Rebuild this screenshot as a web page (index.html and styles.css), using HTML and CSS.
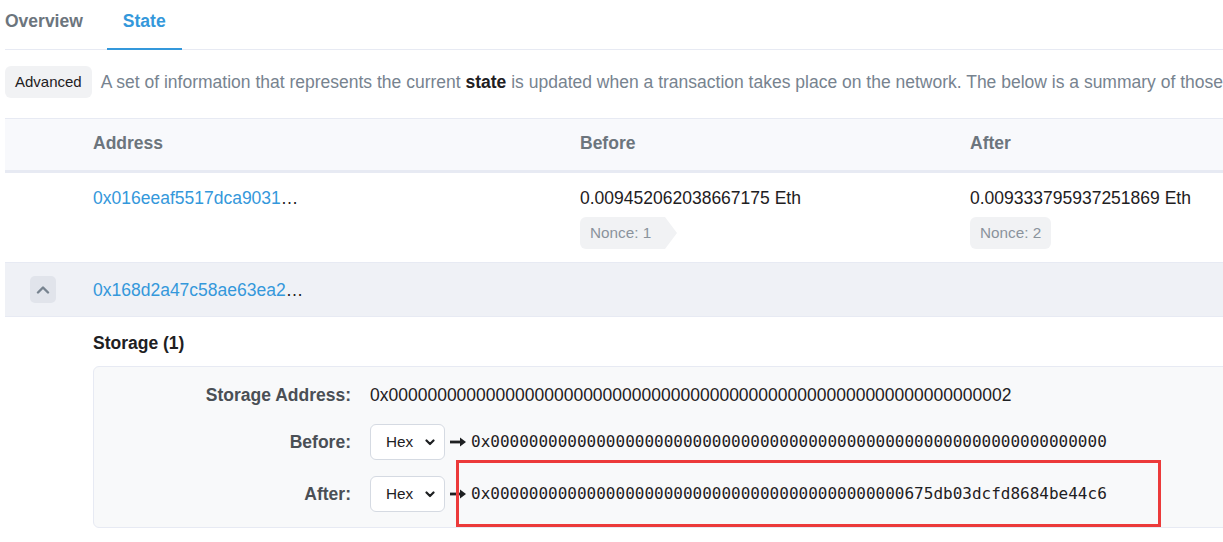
FILE: index.html
```html
<!DOCTYPE html>
<html lang="en">
<head>
<meta charset="utf-8">
<title>State</title>
<link rel="stylesheet" href="styles.css">
</head>
<body>
<div class="page">
  <nav class="tabs">
    <a class="tab first">Overview</a>
    <a class="tab active">State</a>
  </nav>

  <div class="intro">
    <span class="adv">Advanced</span>
    <p class="desc">A set of information that represents the current <b>state</b> is updated when a transaction takes place on the network. The below is a summary of those</p>
  </div>

  <div class="table">
    <div class="grid thead">
      <div></div>
      <div>Address</div>
      <div>Before</div>
      <div>After</div>
    </div>

    <div class="grid trow">
      <div></div>
      <div class="addr"><a class="link">0x016eeaf5517dca9031</a>…</div>
      <div class="cell">
        <div class="val">0.009452062038667175 Eth</div>
        <span class="nonce tip">Nonce: 1</span>
      </div>
      <div class="cell">
        <div class="val">0.009333795937251869 Eth</div>
        <span class="nonce">Nonce: 2</span>
      </div>
    </div>

    <div class="grid trow open">
      <div class="tog-cell">
        <button class="toggle" aria-label="collapse">
          <svg width="14" height="9" viewBox="0 0 14 9"><path d="M2 7.5 L7 2.5 L12 7.5" fill="none" stroke="#77838f" stroke-width="2.4" stroke-linecap="round" stroke-linejoin="round"/></svg>
        </button>
      </div>
      <div class="addr"><a class="link">0x168d2a47c58ae63ea2</a>…</div>
      <div></div>
      <div></div>
    </div>

    <div class="detail">
      <h4 class="st-title">Storage (1)</h4>
      <div class="st-box">
        <div class="st-row first-row">
          <div class="st-label">Storage Address:</div>
          <div class="st-val">0x0000000000000000000000000000000000000000000000000000000000000002</div>
        </div>
        <div class="st-row mid-row">
          <div class="st-label">Before:</div>
          <div class="st-val flex">
            <span class="sel">Hex
              <svg width="10" height="7" viewBox="0 0 10 7"><path d="M1.5 1.5 L5 5 L8.5 1.5" fill="none" stroke="#1e2022" stroke-width="2.2" stroke-linecap="round" stroke-linejoin="round"/></svg>
            </span>
            <svg class="arrow" width="16" height="10" viewBox="0 0 16 10"><rect x="0" y="3.6" width="11" height="2.8" fill="#1e2022"/><polygon points="10,0.5 16,5 10,9.5" fill="#1e2022"/></svg>
            <span class="mono">0x0000000000000000000000000000000000000000000000000000000000000000</span>
          </div>
        </div>
        <div class="st-row">
          <div class="st-label">After:</div>
          <div class="st-val flex">
            <span class="sel">Hex
              <svg width="10" height="7" viewBox="0 0 10 7"><path d="M1.5 1.5 L5 5 L8.5 1.5" fill="none" stroke="#1e2022" stroke-width="2.2" stroke-linecap="round" stroke-linejoin="round"/></svg>
            </span>
            <svg class="arrow" width="16" height="10" viewBox="0 0 16 10"><rect x="0" y="3.6" width="11" height="2.8" fill="#1e2022"/><polygon points="10,0.5 16,5 10,9.5" fill="#1e2022"/></svg>
            <span class="mono">0x0000000000000000000000000000000000000000000675db03dcfd8684be44c6</span>
          </div>
        </div>
      </div>
    </div>
  </div>
</div>
<div class="highlight"></div>
</body>
</html>
```

FILE: styles.css
```css
html, body {
  margin: 0;
  padding: 0;
  background: #fff;
}
body {
  position: relative;
  width: 1223px;
  height: 542px;
  overflow: hidden;
  font-family: "Liberation Sans", Arial, sans-serif;
  font-size: 17.5px;
  line-height: 22px;
  color: #1e2022;
}
.page {
  width: 1300px;
  padding-left: 5px;
}

/* tabs */
.tabs {
  display: flex;
  gap: 8px;
  height: 49px;
  border-bottom: 1px solid #e7eaf3;
}
.tab {
  display: block;
  padding: 10px 16px 15px;
  font-weight: bold;
  color: #6c757d;
  border-bottom: 2px solid transparent;
  margin-bottom: -1px;
}
.tab.first {
  padding-left: 0;
}
.tab.active {
  color: #3498db;
  border-bottom-color: #3498db;
}

/* intro */
.intro {
  display: flex;
  align-items: center;
  gap: 9px;
  margin-top: 16px;
  height: 32px;
}
.adv {
  display: inline-block;
  height: 32px;
  line-height: 32px;
  padding: 0 10px;
  font-size: 15px;
  background: #f1f2f4;
  border-radius: 6px;
  color: #1e2022;
}
.desc {
  margin: 0;
  white-space: nowrap;
  color: #77838f;
}
.desc b {
  color: #1e2022;
}

/* table */
.table {
  margin-top: 20px;
  border-top: 1px solid #e7eaf3;
}
.grid {
  display: grid;
  grid-template-columns: 88px 487px 390px 1fr;
}
.thead {
  box-sizing: border-box;
  height: 54px;
  padding-top: 13px;
  align-items: start;
  background: #f8f9fc;
  border-bottom: 3px solid #e7eaf3;
  font-weight: bold;
  color: #6c757d;
}
.trow {
  border-bottom: 1px solid #e7eaf3;
}
.trow > div {
  padding-top: 14px;
  padding-bottom: 13px;
}
.cell .val {
  color: #1e2022;
}
.link {
  color: #3498db;
}
.nonce {
  display: inline-block;
  margin-top: 8px;
  height: 32px;
  line-height: 32px;
  padding: 0 10px;
  font-size: 15.3px;
  color: #8a939c;
  background: #f1f2f4;
  border-radius: 6px;
}
.nonce.tip {
  padding-right: 22px;
  border-radius: 6px 0 0 6px;
  clip-path: polygon(0 0, 85px 0, 97px 50%, 85px 100%, 0 100%);
  width: 65px;
}
.trow.open {
  background: #eff1f6;
  align-items: center;
}
.trow.open > div {
  padding-top: 13px;
  padding-bottom: 13px;
}
.tog-cell {
  padding-left: 25px;
}
.toggle {
  display: flex;
  align-items: center;
  justify-content: center;
  width: 26px;
  height: 27px;
  padding: 0;
  border: 0;
  border-radius: 5px;
  background: #e1e4eb;
}

/* storage detail */
.detail {
  padding-left: 88px;
}
.st-title {
  margin: 15px 0 12px;
  font-size: 17.5px;
  line-height: 22px;
  font-weight: bold;
  color: #1e2022;
}
.st-box {
  background: #f8f9fa;
  border: 1px solid #e7eaf3;
  border-radius: 6px;
  padding: 17px 0 15px;
}
.st-row {
  display: grid;
  grid-template-columns: 257px 1fr;
  column-gap: 19px;
  align-items: center;
}
.st-row.first-row {
  margin-bottom: 18px;
}
.st-row.mid-row {
  margin-bottom: 16px;
}
.st-label {
  text-align: right;
  font-weight: bold;
  color: #4a4f55;
}
.st-val {
  color: #1e2022;
  white-space: nowrap;
}
.flex {
  display: flex;
  align-items: center;
}
.sel {
  box-sizing: border-box;
  display: flex;
  align-items: center;
  gap: 12px;
  width: 75px;
  height: 36px;
  padding-left: 15px;
  font-size: 15.3px;
  background: #fff;
  border: 1px solid #d5dae2;
  border-radius: 6px;
  color: #1e2022;
}
.arrow {
  margin: 0 5px;
}
.mono {
  font-family: "DejaVu Sans Mono", "Liberation Mono", monospace;
  font-size: 16px;
  color: #1e2022;
}

/* annotation overlay */
.highlight {
  position: absolute;
  left: 456px;
  top: 460px;
  width: 699px;
  height: 61px;
  border: 3px solid #ec3a3a;
}
```
